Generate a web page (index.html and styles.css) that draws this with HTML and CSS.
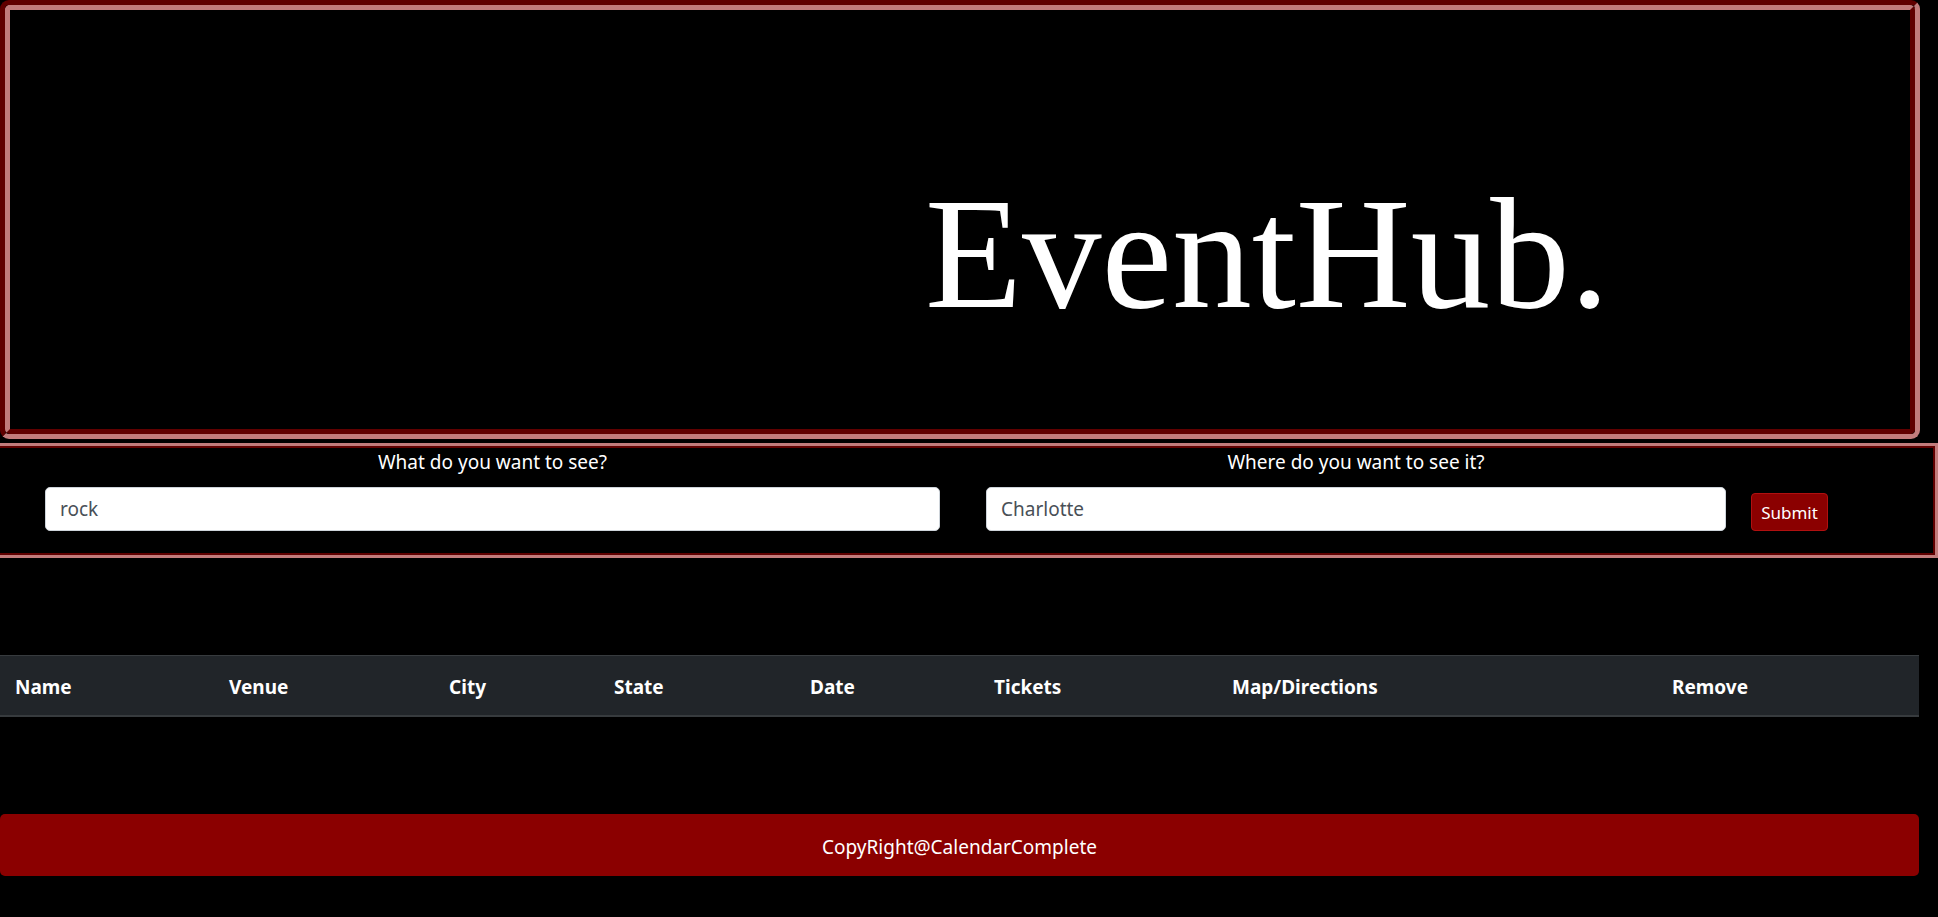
FILE: index.html
```html
<!DOCTYPE html>
<html lang="en">
<head>
<meta charset="utf-8">
<title>EventHub</title>
<link rel="stylesheet" href="styles.css">
</head>
<body>
<header class="hero">
  <div class="hero-inner">
    <h1 class="brand">EventHub.</h1>
  </div>
</header>

<form class="search">
  <div class="field field-what">
    <label for="what">What do you want to see?</label>
    <input id="what" type="text" value="rock">
  </div>
  <div class="field field-where">
    <label for="where">Where do you want to see it?</label>
    <input id="where" type="text" value="Charlotte">
  </div>
  <button type="button" class="submit">Submit</button>
</form>

<div class="results">
  <div class="thead">
    <div class="th">Name</div>
    <div class="th">Venue</div>
    <div class="th">City</div>
    <div class="th">State</div>
    <div class="th">Date</div>
    <div class="th">Tickets</div>
    <div class="th">Map/Directions</div>
    <div class="th">Remove</div>
  </div>
</div>

<footer class="footer">CopyRight@CalendarComplete</footer>
</body>
</html>
```

FILE: styles.css
```css
* { box-sizing: border-box; }

html, body {
  margin: 0;
  padding: 0;
  background: #000;
  color: #fff;
  font-family: "Noto Sans", "Open Sans", sans-serif;
  overflow: hidden;
}

body {
  width: 1938px;
}

.hero {
  width: 1920px;
  height: 439px;
  border: 5px solid;
  border-color: #600000 #c27c7c #c27c7c #600000;
  border-radius: 9px;
}

.hero-inner {
  height: 100%;
  border: 5px solid;
  border-color: #c27c7c #600000 #600000 #c27c7c;
  border-radius: 5px;
  display: flex;
  align-items: flex-start;
  padding-left: 915px;
  padding-top: 164px;
}

.brand {
  margin: 0;
  font-family: "Liberation Serif", "Times New Roman", serif;
  font-weight: normal;
  font-size: 159px;
  line-height: 1;
  color: #fff;
  white-space: nowrap;
}

.search {
  margin-top: 4px;
  margin-left: -10px;
  width: 1948px;
  height: 115px;
  border: 3px solid #c27c7c;
  box-shadow: inset 0 0 0 2px #600000;
  display: flex;
  align-items: flex-start;
  padding-top: 4px;
  padding-left: 52px;
}

.field {
  display: flex;
  flex-direction: column;
  align-items: center;
}

.field-what { width: 895px; }
.field-where { width: 740px; margin-left: 46px; }

.field label {
  font-size: 19px;
  line-height: 24px;
  color: #fff;
  margin-bottom: 13px;
}

.field input {
  width: 100%;
  height: 44px;
  border: 1px solid #ced4da;
  border-radius: 5px;
  background: #fff;
  font-family: inherit;
  font-size: 19px;
  color: #495057;
  padding: 0 14px;
}

.submit {
  margin-left: 25px;
  margin-top: 43px;
  width: 77px;
  height: 38px;
  background: #8b0000;
  color: #fff;
  border: 1px solid #b01010;
  border-radius: 4px;
  font-family: inherit;
  font-size: 17px;
  padding: 0;
}

.results {
  margin-top: 97px;
  width: 1919px;
}

.thead {
  display: grid;
  grid-template-columns: 214px 220px 165px 196px 184px 238px 440px 1fr;
  background: #212529;
  border-top: 1px solid #373b3e;
  border-bottom: 2px solid #373b3e;
  height: 62px;
  align-items: center;
  padding-top: 3px;
}

.th {
  padding-left: 15px;
  font-weight: 700;
  font-size: 19px;
  color: #fff;
}

.footer {
  margin-top: 97px;
  width: 1919px;
  height: 62px;
  background: #8b0000;
  border-radius: 5px;
  display: flex;
  align-items: center;
  justify-content: center;
  font-size: 19px;
  color: #fff;
  padding-top: 3px;
}
```
